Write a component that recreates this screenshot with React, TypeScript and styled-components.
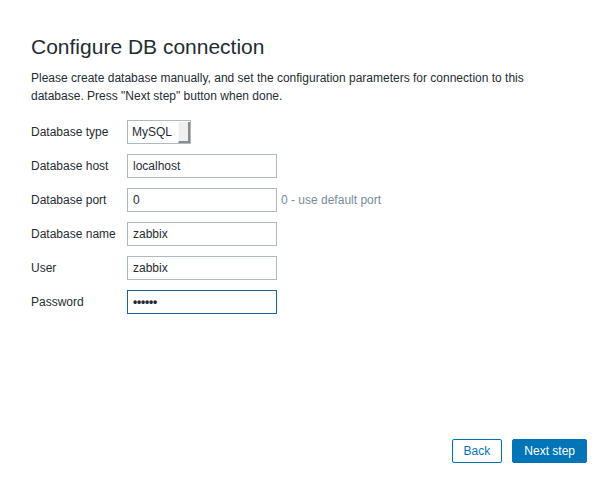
import styled, { createGlobalStyle } from 'styled-components';

const GlobalStyle = createGlobalStyle`
  html, body {
    margin: 0;
    padding: 0;
    background: #ffffff;
  }
  body {
    font-family: "Liberation Sans", Arial, sans-serif;
    font-size: 12px;
    color: #1f2c33;
  }
`;

const Page = styled.div`
  width: 615px;
  height: 487px;
  box-sizing: border-box;
  padding: 32px 28px 24px 31px;
  display: flex;
  flex-direction: column;
`;

const Title = styled.h1`
  margin: 0 0 7px;
  font-size: 21px;
  font-weight: normal;
  line-height: 30px;
  color: #1f2c33;
`;

const Intro = styled.p`
  margin: 0 0 15px;
  line-height: 18px;
  width: 540px;
`;

const Form = styled.div`
  display: grid;
  grid-template-columns: 96px auto;
  row-gap: 10px;
  align-items: center;
`;

const Label = styled.label`
  line-height: 24px;
`;

const FieldCell = styled.div`
  display: flex;
  align-items: center;
`;

const TextInput = styled.div<{ $focused?: boolean }>`
  box-sizing: border-box;
  width: 150px;
  height: 24px;
  padding: 0 5px;
  line-height: 22px;
  border: 1px solid ${(p) => (p.$focused ? '#1f6598' : '#acbbc2')};
  background: #ffffff;
  color: #1f2c33;
  font-size: 12px;
`;

const Dots = styled.span`
  font-size: 12px;
  font-weight: bold;
  letter-spacing: -0.2px;
`;

const Hint = styled.span`
  margin-left: 4px;
  color: #768d99;
`;

const Select = styled.div`
  box-sizing: border-box;
  width: 64px;
  height: 24px;
  display: flex;
  border: 1px solid #acbbc2;
  background: #ffffff;
`;

const SelectValue = styled.span`
  flex: 1;
  padding-left: 4px;
  line-height: 22px;
`;

const SelectButton = styled.span`
  width: 12px;
  box-sizing: border-box;
  margin: 1px 0 0;
  background: #efefef;
  border-right: 2px solid #8a8a8a;
  border-bottom: 2px solid #8a8a8a;
  border-left: 1px solid #f7f7f7;
`;

const Spacer = styled.div`
  flex: 1;
`;

const Footer = styled.div`
  display: flex;
  justify-content: flex-end;
  gap: 10px;
`;

const Button = styled.button<{ $primary?: boolean }>`
  box-sizing: border-box;
  height: 24px;
  padding: 0 11px;
  font-family: inherit;
  font-size: 12px;
  border-radius: 2px;
  border: 1px solid #0275b8;
  background: ${(p) => (p.$primary ? '#0275b8' : '#ffffff')};
  color: ${(p) => (p.$primary ? '#ffffff' : '#0275b8')};
  cursor: pointer;
`;

const fields = [
  { label: 'Database host', value: 'localhost' },
  { label: 'Database port', value: '0', hint: '0 - use default port' },
  { label: 'Database name', value: 'zabbix' },
  { label: 'User', value: 'zabbix' },
];

export default function App() {
  return (
    <>
      <GlobalStyle />
      <Page>
        <Title>Configure DB connection</Title>
        <Intro>
          Please create database manually, and set the configuration parameters for connection to
          this database. Press "Next step" button when done.
        </Intro>
        <Form>
          <Label>Database type</Label>
          <FieldCell>
            <Select>
              <SelectValue>MySQL</SelectValue>
              <SelectButton />
            </Select>
          </FieldCell>
          {fields.map((f) => (
            <>
              <Label key={f.label}>{f.label}</Label>
              <FieldCell key={f.label + '-v'}>
                <TextInput>{f.value}</TextInput>
                {f.hint && <Hint>{f.hint}</Hint>}
              </FieldCell>
            </>
          ))}
          <Label>Password</Label>
          <FieldCell>
            <TextInput $focused>
              <Dots>••••••</Dots>
            </TextInput>
          </FieldCell>
        </Form>
        <Spacer />
        <Footer>
          <Button>Back</Button>
          <Button $primary>Next step</Button>
        </Footer>
      </Page>
    </>
  );
}
